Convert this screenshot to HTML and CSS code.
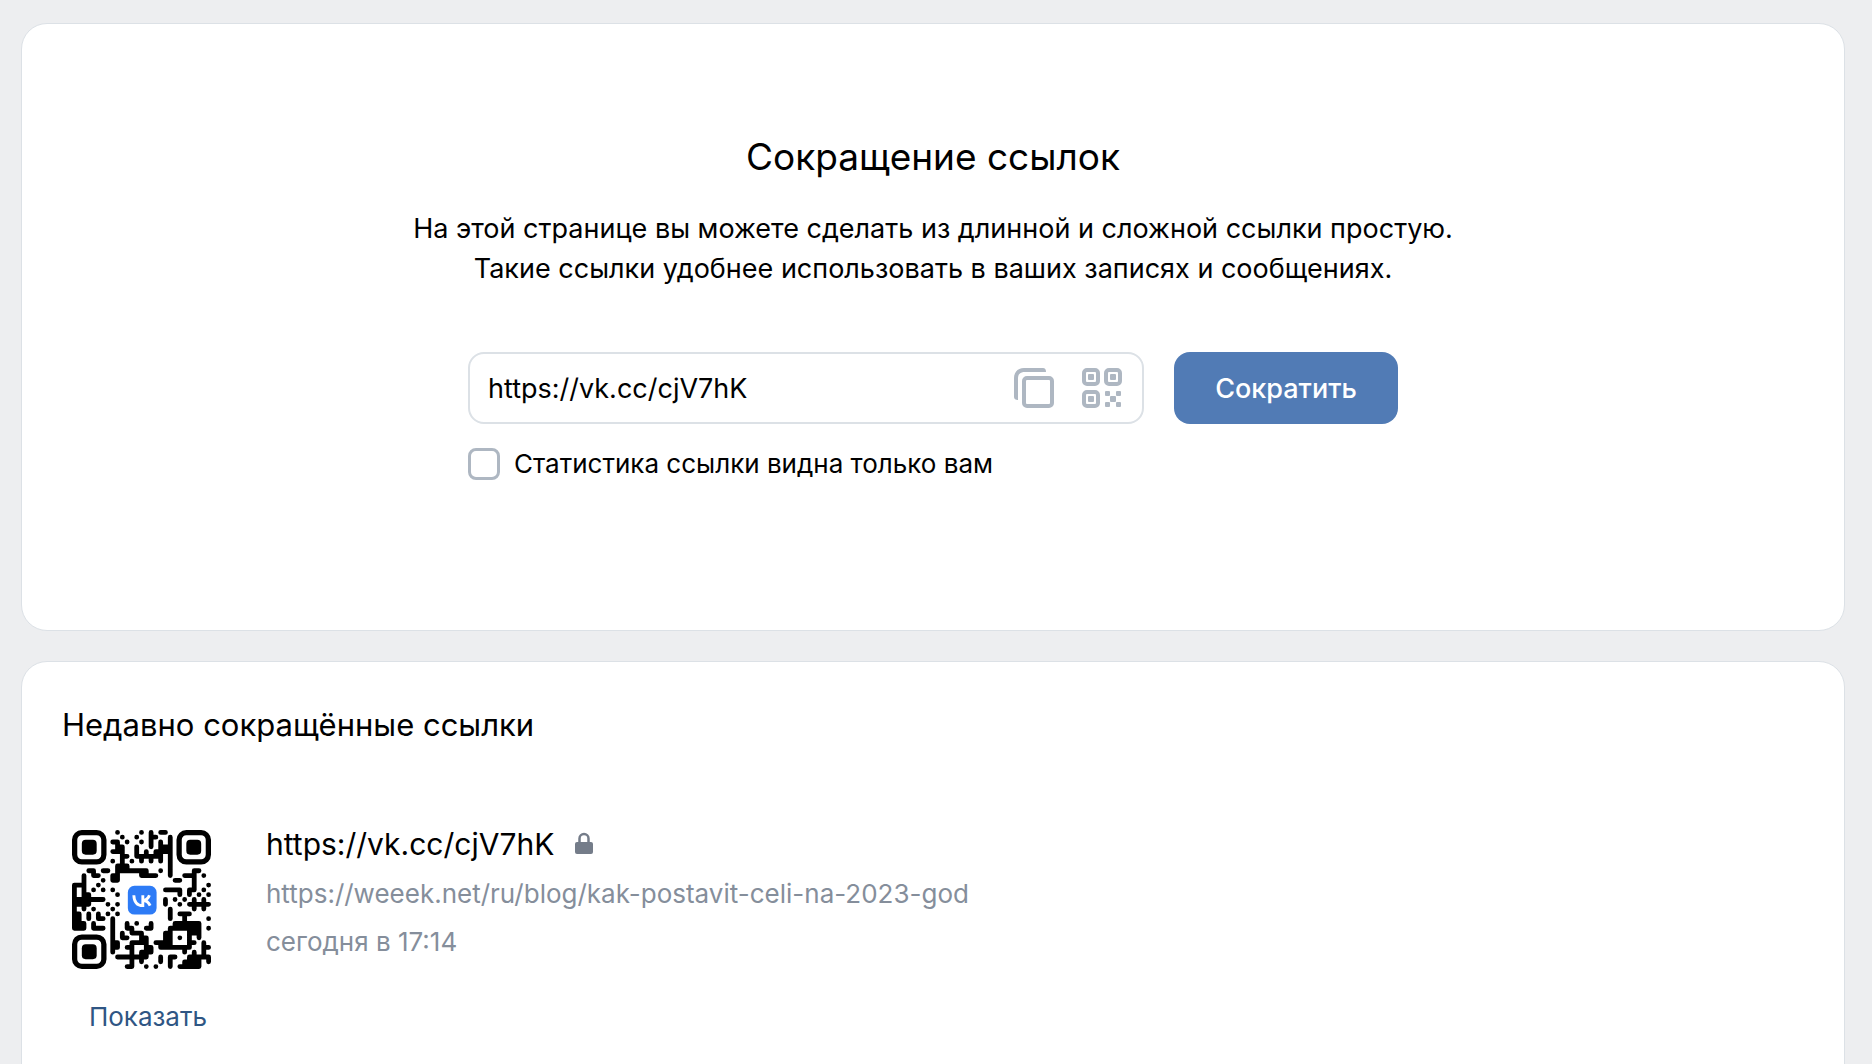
FILE: index.html
```html
<!DOCTYPE html>
<html lang="ru">

<head>
    <meta charset="UTF-8">
    <meta name="viewport" content="width=device-width, initial-scale=1.0">
    <title>Сокращение ссылок</title>
    <link rel="stylesheet" href="styles.css">
</head>

<body>
    <main class="page">
        <section class="card shortener">
            <h1 class="title">Сокращение ссылок</h1>
            <p class="description">
                На этой странице вы можете сделать из длинной и сложной ссылки простую.<br>
                Такие ссылки удобнее использовать в ваших записях и сообщениях.
            </p>
            <form class="form">
                <div class="form-row">
                    <div class="field">
                        <input type="text" class="field-input" id="link" aria-label="Ссылка" value="https://vk.cc/cjV7hK">
                        <button type="button" class="icon-btn" aria-label="Скопировать">
                            <svg width="40" height="40" viewBox="0 0 40 40" fill="none" stroke="#aeb7c2" stroke-width="4">
                                <path d="M0 29V10C0 4 4 0 10 0h19c2 0 3 1.500 3 4H11C6 4 4 6 4 11v21c-2.500 0-4-1-4-3z" fill="#aeb7c2" stroke="none" />
                                <rect x="10" y="10" width="28" height="28" rx="3" />
                            </svg>
                        </button>
                        <button type="button" class="icon-btn" aria-label="QR-код">
                            <svg width="40" height="40" viewBox="0 0 40 40" fill="#aeb7c2">
                                <g fill="none" stroke="#aeb7c2" stroke-width="4">
                                    <rect x="2" y="2" width="14" height="14" rx="3" />
                                    <rect x="24" y="2" width="14" height="14" rx="3" />
                                    <rect x="2" y="24" width="14" height="14" rx="3" />
                                </g>
                                <rect x="6" y="6" width="6" height="6" rx="1" />
                                <rect x="28" y="6" width="6" height="6" rx="1" />
                                <rect x="6" y="28" width="6" height="6" rx="1" />
                                <rect x="23" y="23" width="5" height="5" rx="1" />
                                <rect x="34" y="23" width="5" height="5" rx="1" />
                                <rect x="28" y="28" width="6" height="6" rx="1" />
                                <rect x="23" y="34" width="5" height="5" rx="1" />
                                <rect x="34" y="34" width="5" height="5" rx="1" />
                            </svg>
                        </button>
                    </div>
                    <button type="submit" class="submit-btn">Сократить</button>
                </div>
                <div class="check-row">
                    <input type="checkbox" class="checkbox" id="private">
                    <label for="private">Статистика ссылки видна только вам</label>
                </div>
            </form>
        </section>

        <section class="card recent">
            <h2 class="subtitle">Недавно сокращённые ссылки</h2>
            <div class="link-item">
                <div class="link-qr">
                    <svg class="qr" viewBox="0 0 29 29" role="img" aria-label="QR-код ссылки">
                        <path id="qr-modules" fill="none" stroke="#000" stroke-width="1" stroke-linecap="round" stroke-linejoin="round" />
                        <g fill="none" stroke="#000" stroke-width="1.1">
                            <rect x=".55" y=".55" width="6.100" height="6.100" rx="1.500" />
                            <rect x="22.350" y=".55" width="6.100" height="6.100" rx="1.500" />
                            <rect x=".55" y="22.350" width="6.100" height="6.100" rx="1.500" />
                        </g>
                        <rect x="2.050" y="2.050" width="3.100" height="3.100" rx=".8" />
                        <rect x="23.850" y="2.050" width="3.100" height="3.100" rx=".8" />
                        <rect x="2.050" y="23.850" width="3.100" height="3.100" rx=".8" />
                        <g transform="translate(11.650 11.650) scale(.25)">
                            <rect width="24" height="24" rx="5.500" fill="#2d7bf6" />
                            <path d="M5 7.800c.2 5.600 2.700 8.700 7.500 8.700V7.800M12.500 12.200c2.600-.2 4.700-2.100 5.500-4.400M12.500 12.200c2.900 0 5 1.700 6.100 4.300" fill="none" stroke="#fff" stroke-width="2.400" />
                        </g>
                    </svg>
                    <a href="#" class="show-link">Показать</a>
                </div>
                <div class="link-info">
                    <div class="short-link">
                        <a href="#">https://vk.cc/cjV7hK</a>
                        <svg width="20" height="24" viewBox="0 0 20 24" role="img" aria-label="Статистика скрыта">
                            <path d="M5.500 11V6.500a4.500 4.500 0 0 1 9 0V11" fill="none" stroke="#747c89" stroke-width="2.500" />
                            <rect x="1" y="10" width="18" height="12" rx="2" fill="#747c89" />
                        </svg>
                    </div>
                    <a href="#" class="full-link">https://weeek.net/ru/blog/kak-postavit-celi-na-2023-god</a>
                    <div class="date">сегодня в 17:14</div>
                </div>
            </div>
        </section>
    </main>

    <script src="qr.js"></script>
</body>

</html>
```
FILE: styles.css
```css
* {
    box-sizing: border-box;
    margin: 0;
    padding: 0;
}

body {
    background-color: #edeef0;
    color: #000;
    font-family: Inter, "Liberation Sans", sans-serif;
    font-size: 27px;
}

a {
    color: inherit;
    text-decoration: none;
}

button,
input {
    font: inherit;
}

.page {
    display: flex;
    flex-direction: column;
    gap: 30px;
    padding: 23px 27px 0 21px;
}

.card {
    background-color: #fff;
    border: 1px solid #dce1e6;
    border-radius: 26px;
}

.shortener {
    display: flex;
    flex-direction: column;
    align-items: center;
    padding: 109px 40px 150px;
}

.title {
    font-size: 37px;
    font-weight: 400;
    line-height: 48px;
}

.description {
    margin-top: 28px;
    line-height: 40px;
    text-align: center;
}

.form {
    width: 100%;
    max-width: 930px;
    margin-top: 63px;
}

.form-row {
    display: flex;
    gap: 30px;
}

.field {
    display: flex;
    flex: 1;
    align-items: center;
    gap: 28px;
    height: 72px;
    padding: 0 20px 0 18px;
    border: 2px solid #dce1e6;
    border-radius: 16px;
}

.field-input {
    flex: 1;
    min-width: 0;
    border: 0;
    outline: 0;
    background: none;
}

.icon-btn {
    display: flex;
    border: 0;
    background: none;
    cursor: pointer;
}

.submit-btn {
    width: 224px;
    height: 72px;
    border: 0;
    border-radius: 16px;
    background-color: #517bb5;
    color: #fff;
    font-weight: 500;
    cursor: pointer;
}

.check-row {
    display: flex;
    align-items: center;
    gap: 14px;
    margin-top: 24px;
    font-size: 26px;
    line-height: 32px;
}

.checkbox {
    appearance: none;
    width: 32px;
    height: 32px;
    border: 3px solid #aeb7c2;
    border-radius: 8px;
}

.checkbox:checked {
    background-color: #517bb5;
}

.recent {
    padding: 40px 40px 60px;
}

.subtitle {
    font-size: 31px;
    font-weight: 400;
    line-height: 46px;
}

.link-item {
    display: flex;
    gap: 55px;
    margin-top: 82px;
}

.link-qr {
    display: flex;
    flex-direction: column;
    gap: 32px;
    padding-left: 10px;
}

.qr {
    width: 139px;
    height: 139px;
}

.show-link {
    align-self: flex-end;
    padding-right: 4px;
    color: #2f5684;
    font-size: 26px;
    line-height: 32px;
}

.short-link {
    display: flex;
    align-items: center;
    gap: 20px;
    font-size: 30px;
    line-height: 28px;
}

.full-link,
.date {
    display: block;
    margin-top: 16px;
    color: #858e9b;
    font-size: 26px;
    line-height: 32px;
}

.full-link {
    margin-top: 20px;
}
```
FILE: qr.js
```js
// 29x29 modules, corner markers are drawn separately
var rows = [
    '.........#....#.#.##.........',
    '..........#..#..##..#........',
    '........##.#..#.#.#.#........',
    '.........##..#..#.###........',
    '........###..#.#.####........',
    '..........##.######.#........',
    '........#.#.#.#.#.#.#........',
    '.........###........#........',
    '...##.##.#######..#.#....##..',
    '..#.##..##....####..#..###.#.',
    '..#...#.##...........##..#...',
    '###..#...................#..#',
    '#.#.#.#.#..........####.##.#.',
    '#.##.....#............#.#.#.#',
    '#######............#.#.#.#.#.',
    '####...#.#.........#..#.#####',
    '#.#.#...#...........#....#.#.',
    '##.#.#.#.#..........#.###....',
    '##.#.##.#...........#..#....#',
    '###.#...#..#.#..#....######..',
    '###.###.#..##..##...#######.#',
    '........#.#.###....##...###..',
    '........#.##..##...##.#.#.#..',
    '........##..####.####...##.#.',
    '........##.##..##.#######..##',
    '........#...#.###......#.#.#.',
    '.........#######..#.##..#####',
    '............#.#...#.#..####.#',
    '...........##..#.#..#.#####..'
];

var path = '';
for (var y = 0; y < rows.length; y++) {
    for (var x = 0; x < rows[y].length; x++) {
        if (rows[y][x] !== '#') continue;
        var right = rows[y][x + 1] === '#';
        var below = rows[y + 1] && rows[y + 1][x] === '#';
        path += 'M' + (x + 0.5) + ' ' + (y + 0.5) + 'h' + (right ? 1 : 0);
        if (below) {
            path += 'M' + (x + 0.5) + ' ' + (y + 0.5) + 'v1';
        }
    }
}
document.getElementById('qr-modules').setAttribute('d', path);
```
